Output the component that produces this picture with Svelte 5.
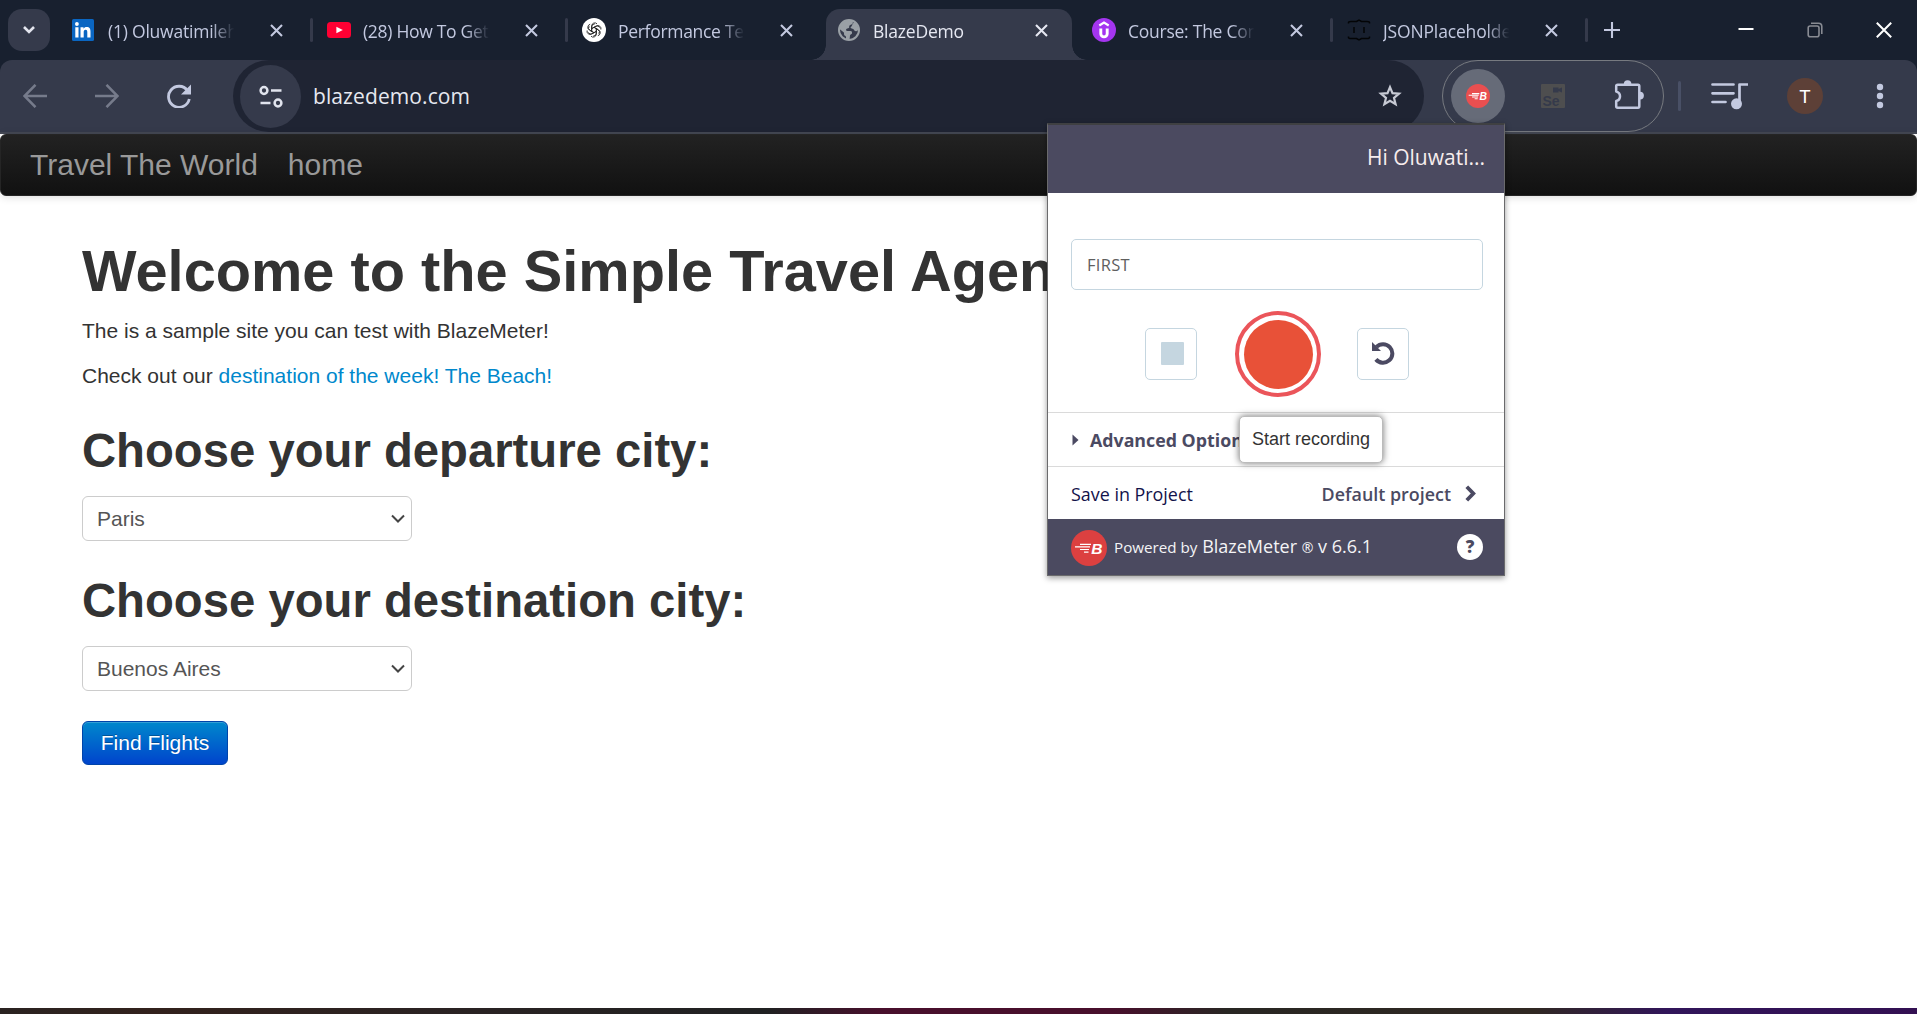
<script>
  const tabs = [
    { icon: 'linkedin', title: '(1) Oluwatimilehin', spacing: -0.22 },
    { icon: 'youtube', title: '(28) How To Get', spacing: -0.3 },
    { icon: 'openai', title: 'Performance Test', spacing: -0.3 },
    { icon: 'globe', title: 'BlazeDemo', active: true, spacing: -0.2 },
    { icon: 'udemy', title: 'Course: The Com', spacing: -0.25 },
    { icon: 'json', title: 'JSONPlaceholder', spacing: -0.15 }
  ];
  const petals = [0, 60, 120, 180, 240, 300];
</script>

{#snippet blaze(weight)}
  <svg viewBox="0 0 36 36" width="100%" height="100%">
    <path d="M9 14.300h11M4 16.900h15M9 19.500h9M13 22.100h4.500" fill="none" stroke="#fff" stroke-width={weight} />
    <text x="20.300" y="23.600" font-size="15.500" font-weight="700" font-style="italic" fill="#fff" font-family="Liberation Sans, sans-serif">B</text>
  </svg>
{/snippet}

<div class="window">
  <header class="strip">
    <button class="search" aria-label="Search tabs">
      <svg width="14" height="10" viewBox="0 0 14 10"><path d="M2 2l5 5 5-5" fill="none" stroke="#e3e5ee" stroke-width="2.600" /></svg>
    </button>
    <div class="tabs">
      {#each tabs as tab, i}
        <div class="tab" class:active={tab.active}>
          <span class="favicon">
            {#if tab.icon === 'linkedin'}
              <svg width="24" height="24" viewBox="0 0 24 24">
                <rect x="0" y="1" width="22" height="22" rx="1.500" fill="#0a66c2" />
                <circle cx="4.900" cy="6" r="1.900" fill="#fff" />
                <path transform="translate(-1 0)" d="M4.300 9.300h3.200v10.200H4.300zM9.500 9.300h3v1.400c.6-1 1.700-1.650 3.100-1.650 3.100 0 3.900 2 3.900 4.700v5.750h-3.200v-5.100c0-1.400-.2-2.600-1.700-2.600s-1.900 1.200-1.900 2.500v5.200H9.500z" fill="#fff" />
              </svg>
            {:else if tab.icon === 'youtube'}
              <svg width="24" height="24" viewBox="0 0 24 24">
                <rect x="0" y="4" width="24" height="16" rx="3.500" fill="#ff0033" />
                <path d="M9.400 8.700l6.400 3.300-6.400 3.300z" fill="#fff" />
              </svg>
            {:else if tab.icon === 'openai'}
              <svg width="24" height="24" viewBox="0 0 24 24">
                <circle cx="12" cy="12" r="12" fill="#fff" />
                {#each petals as a}
                  <path transform="rotate({a} 12 12)" d="M9.700 13.300V7.900a3.100 3.100 0 0 1 5.300-2.100M9.700 10.600l3.800-2.200a3.100 3.100 0 0 1 4.200 1.200" fill="none" stroke="#222" stroke-width=".85" />
                {/each}
              </svg>
            {:else if tab.icon === 'globe'}
              <svg width="24" height="24" viewBox="0 0 24 24">
                <circle cx="12" cy="12" r="10" fill="none" stroke="#9aa0a6" stroke-width="2" />
                <path d="M12 2c1.500 0 3 .4 4 1l-.3 2.500c-.8 1.200-2.300 1-3.200 1.900-.8.900.2 1.900-.7 2.700-.9.700-2 .2-2.600 1.100-.5.9.2 1.700 1.200 1.800h3.200c1.400.2 1.600 1.300 1.400 2.300-.2 1.100-1.700 1.100-2 2.200l-.4 3.700A10.500 10.500 0 0 1 9 21.500v-2.500c0-1.200-1.500-1.200-1.900-2.300-.2-.9.200-1.600-.5-2.400L2.500 11A10 10 0 0 1 12 2z" fill="#9aa0a6" />
                <path d="M16.200 5.200c-1.200 1-.7 2.100-1.600 3-.6.700-1.300 1.100-.9 1.900.5.700 1.600.4 2.500.9.800.5 1 1.800 2 2.100 1.200.3 2.200-.6 3.300-1.200a9 9 0 0 0-4.300-7.600z" fill="#9aa0a6" />
              </svg>
            {:else if tab.icon === 'udemy'}
              <svg width="24" height="24" viewBox="0 0 24 24">
                <circle cx="12" cy="12" r="12" fill="#a435f0" />
                <path d="M7.300 7.500L12 4.600l4.700 2.900" fill="none" stroke="#fff" stroke-width="2.200" />
                <path d="M8.800 10.500v5.200a3.200 3.200 0 0 0 6.400 0v-5.200" fill="none" stroke="#fff" stroke-width="2.900" />
              </svg>
            {:else}
              <svg width="24" height="24" viewBox="0 0 24 24" fill="none" stroke="#030406" stroke-width="1.500">
                <path d="M1.500 5.500V4.500Q1.500 3.500 4 3.500H9.500L12 2l2.500 1.500H20Q22.500 3.500 22.500 4.500v1M1.500 18.500v1Q1.500 20.500 4 20.500H9.500L12 22l2.500-1.500H20Q22.500 20.500 22.500 19.500v-1M7 9v6M17 9v6" />
              </svg>
            {/if}
          </span>
          <span class="title" style="letter-spacing: {tab.spacing}px">{tab.title}</span>
          <svg class="close" width="13" height="13" viewBox="0 0 13 13"><path d="M1 1l11 11M12 1L1 12" fill="none" stroke="currentColor" stroke-width="2.100" /></svg>
          <span class="sep" class:hidden={i === 2 || i === 3}></span>
        </div>
      {/each}
    </div>
    <svg class="plus" width="16" height="16" viewBox="0 0 16 16"><path d="M8 0v16M0 8h16" stroke="#c3c9e0" stroke-width="2.100" /></svg>
    <div class="controls">
      <svg width="16" height="16" viewBox="0 0 16 16"><path d="M.5 7h15" stroke="#fff" stroke-width="2" /></svg>
      <svg width="16" height="16" viewBox="0 0 16 16" fill="none" stroke="#888b93" stroke-width="1.600"><rect x="1.200" y="4" width="10.800" height="10.800" rx="2" /><path d="M4 1.300h7.500a3.300 3.300 0 0 1 3.300 3.300V12" /></svg>
      <svg width="16" height="16" viewBox="0 0 16 16"><path d="M.8.800l14.400 14.400M15.200.8L.8 15.200" stroke="#fff" stroke-width="2" /></svg>
    </div>
  </header>

  <div class="toolbar">
    <div class="nav-buttons">
      <svg width="24" height="24" viewBox="0 0 24 24" fill="none" stroke="#767b8b" stroke-width="2.500"><path d="M24 12H1.500M12.500.8L1.500 12l11 11.200" /></svg>
      <svg width="24" height="24" viewBox="0 0 24 24" fill="none" stroke="#767b8b" stroke-width="2.500"><path d="M0 12h22.500M11.500.8l11 11.200-11 11.200" /></svg>
      <svg width="24" height="24" viewBox="0 0 24 24"><path d="M20.500 6.500A10.500 10.500 0 1 0 22.300 15" fill="none" stroke="#c3c9e0" stroke-width="2.800" /><path d="M24 .5v10H14z" fill="#c3c9e0" /></svg>
    </div>
    <div class="omnibox">
      <span class="tune">
        <svg width="24" height="24" viewBox="0 0 24 24" fill="none" stroke="#e1e4ee" stroke-width="2.500"><circle cx="5" cy="6.500" r="3.400" /><path d="M12 6.500h10.500M1.500 19h10" /><circle cx="19" cy="19" r="3.400" /></svg>
      </span>
      <span class="url">blazedemo.com</span>
      <svg class="star" width="24" height="24" viewBox="0 0 24 24"><path d="M12 3.200l2.500 6 6.500.500-5 4.200 1.600 6.300L12 16.800l-5.600 3.400L8 13.900 3 9.700l6.500-.5z" fill="none" stroke="#c7cad4" stroke-width="2.200" /></svg>
    </div>
    <div class="extensions">
      <span class="ext-active"><span class="ext-logo">{@render blaze(1.8)}</span></span>
      <span class="selenium">
        <svg width="24" height="24" viewBox="0 0 24 24"><rect width="24" height="24" rx="1" fill="#4e4e4f" /><path d="M12 3.500h5.500v1.500l3.500-1.500v5l-3.500-1.500v1.500H12z" fill="#353a4b" /><text x="1.500" y="21.500" font-family="Liberation Sans, sans-serif" font-weight="700" font-size="14" fill="#353a4b">Se</text></svg>
      </span>
      <svg class="puzzle" width="30" height="30" viewBox="0 0 30 30"><path d="M2.200 6.200Q2.200 4.700 3.700 4.700H24Q25.300 4.700 25.300 6v20.300q0 1.400-1.300 1.400H3.700q-1.500 0-1.500-1.400v-5.300a4.800 4.800 0 0 0 0-9.400z" fill="none" stroke="#c3c9e0" stroke-width="2.500" stroke-linejoin="round" /><path d="M9.800 4a3.800 3.800 0 0 1 7.600 0zM26 11.700a3.900 3.900 0 0 1 0 7.800z" fill="#c3c9e0" /></svg>
    </div>
    <span class="divider"></span>
    <svg class="media" width="37" height="30" viewBox="0 0 37 30"><path d="M1.500 3.500h21M1.500 12.300h21M1.500 21h13M28.500 24V3.500h8" fill="none" stroke="#c3c9e0" stroke-width="2.700" stroke-linecap="round" stroke-linejoin="round" /><circle cx="25.500" cy="22.800" r="5.500" fill="#c3c9e0" /></svg>
    <span class="avatar">T</span>
    <svg class="more" width="8" height="26" viewBox="0 0 8 26" fill="#c3c9e0"><circle cx="4" cy="4" r="3.200" /><circle cx="4" cy="13" r="3.200" /><circle cx="4" cy="22" r="3.200" /></svg>
  </div>

  <main>
    <nav><a href="#world">Travel The World</a><a href="#home">home</a></nav>
    <section>
      <h1>Welcome to the Simple Travel Agency!</h1>
      <p>The is a sample site you can test with BlazeMeter!</p>
      <p>Check out our <a href="#week">destination of the week! The Beach!</a></p>
      <h2>Choose your departure city:</h2>
      <div class="select"><span>Paris</span><svg width="14" height="9" viewBox="0 0 14 9"><path d="M1 1.500l6 6 6-6" fill="none" stroke="#444" stroke-width="2" /></svg></div>
      <h2>Choose your destination city:</h2>
      <div class="select"><span>Buenos Aires</span><svg width="14" height="9" viewBox="0 0 14 9"><path d="M1 1.500l6 6 6-6" fill="none" stroke="#444" stroke-width="2" /></svg></div>
      <button class="find">Find Flights</button>
    </section>
  </main>
  <div class="taskbar"></div>

  <aside class="popup">
    <div class="hello">Hi Oluwati...</div>
    <div class="recorder">
      <div class="name">FIRST</div>
      <div class="actions">
        <span class="square stop"><i></i></span>
        <span class="record"><i></i></span>
        <span class="square">
          <svg width="24" height="24" viewBox="0 0 24 24"><path d="M5.400 5.900a9.300 9.300 0 1 1-.5 12.500" fill="none" stroke="#4b4a62" stroke-width="4" /><path d="M1 1v9h9z" fill="#4b4a62" /></svg>
        </span>
      </div>
    </div>
    <div class="row advanced"><svg width="7" height="12" viewBox="0 0 7 12"><path d="M.5.500l6 5.500-6 5.500z" fill="#4b4a62" /></svg><b>Advanced Options</b></div>
    <div class="row project"><span>Save in Project</span><b>Default project</b><svg width="11" height="17" viewBox="0 0 11 17"><path d="M1.800 1.800L8.300 8.500l-6.500 6.700" fill="none" stroke="#4b4a62" stroke-width="3.800" /></svg></div>
    <div class="footer">
      <span class="logo">{@render blaze(1.2)}</span>
      <span class="powered"><small>Powered by</small> BlazeMeter <sup>®</sup> v 6.6.1</span>
      <span class="help">?</span>
    </div>
    <div class="tooltip">Start recording</div>
  </aside>
</div>

<style>
  :global(body) { background: #fff; overflow: hidden; }
  .window { position: relative; display: flex; flex-direction: column; width: 1917px; height: 1014px; overflow: hidden; background: #18202f; font-family: "Liberation Sans", Arial, sans-serif; }
  svg { display: block; flex: none; }
  span, b, div, nav, button { box-sizing: border-box; }
  .strip { display: flex; align-items: center; height: 60px; flex: none; }
  .search { width: 42px; height: 42px; margin: 0 6px 0 8px; padding: 0; border: 0; border-radius: 14px; background: #353a4b; display: grid; place-items: center; }
  .tabs { display: flex; align-self: stretch; }
  .tab { position: relative; display: flex; align-items: center; width: 255px; height: 60px; padding-left: 16px; color: #c3c9e0; }
  .favicon { flex: none; width: 24px; height: 24px; margin-right: 12px; }
  .title { flex: none; width: 129px; height: 30px; margin-top: 2px; overflow: hidden; white-space: nowrap; font: 17.500px/30px "Open Sans", sans-serif; -webkit-mask-image: linear-gradient(90deg, #000 80%, transparent 98%); mask-image: linear-gradient(90deg, #000 80%, transparent 98%); }
  .close { margin-left: 33px; }
  .sep { flex: none; width: 3px; height: 24px; margin-left: 27px; border-radius: 2px; background: #353a4b; }
  .sep.hidden { visibility: hidden; }
  .active { color: #e6e8f2; }
  .active > * { position: relative; }
  .active::before { content: ''; position: absolute; left: 5px; top: 9px; width: 246px; height: 51px; border-radius: 14px 14px 0 0; background: #353a4b; }
  .active::after { content: ''; position: absolute; left: -10px; bottom: 0; width: 276px; height: 15px; background: radial-gradient(circle at 0 0, transparent 14.500px, #353a4b 15px) left / 15px 15px no-repeat, radial-gradient(circle at 100% 0, transparent 14.500px, #353a4b 15px) right / 15px 15px no-repeat; }
  .plus { margin-left: 18px; }
  .controls { display: flex; gap: 53px; margin-left: auto; margin-right: 25px; }

  .toolbar { display: flex; align-items: center; height: 74px; flex: none; background: #353a4b; border-bottom: 2px solid #444854; border-radius: 12px 12px 0 0; box-sizing: border-box; }
  .nav-buttons { display: flex; gap: 48px; margin-left: 23px; }
  .omnibox { display: flex; align-items: center; width: 1191px; height: 72px; margin-left: 42px; padding: 0 22px 0 7px; border-radius: 36px; background: #1f2433; }
  .tune { display: grid; place-items: center; width: 61px; height: 63px; border-radius: 50%; background: #353a4b; }
  .url { margin: -1px 0 0 12px; color: #e6e8f0; font: 21px/30px "Open Sans", sans-serif; letter-spacing: .1px; }
  .star { margin-left: auto; }
  .extensions { display: flex; align-items: center; width: 222px; height: 72px; margin-left: 18px; padding-left: 8px; border: 1.500px solid #777a80; border-radius: 36px; }
  .ext-active { display: grid; place-items: center; width: 54px; height: 54px; border-radius: 50%; background: #666b78; }
  .ext-logo { width: 24px; height: 24px; border-radius: 50%; background: #e94f50; }
  .selenium { margin-left: 36px; }
  .puzzle { margin: -3px 0 0 49px; }
  .divider { width: 3px; height: 30px; margin-left: 14px; border-radius: 2px; background: #495066; }
  .media { margin-left: 30px; }
  .avatar { width: 36px; height: 36px; margin-left: 39px; border-radius: 50%; background: #5d4037; color: #fff; text-align: center; font: 19px/37px Roboto, sans-serif; }
  .more { margin-left: 53px; }

  main { flex: 1; background: #fff; color: #333; font-size: 21px; line-height: 30px; }
  nav { display: flex; align-items: center; height: 62px; padding-left: 29px; gap: 30px; border: 1px solid #252525; border-radius: 6px; background: linear-gradient(#222, #111); box-shadow: 0 1px 8px rgba(0, 0, 0, .15); font-size: 30px; line-height: 30px; }
  nav a { color: #999; text-decoration: none; }
  section { padding: 45px 0 0 82px; }
  h1, h2, p { margin: 0 0 15px; white-space: nowrap; }
  h1, h2 { line-height: 60px; font-weight: 700; }
  h1 { font-size: 57.750px; }
  h2 { margin-top: 30px; font-size: 47.250px; }
  p a { color: #08c; text-decoration: none; }
  .select { display: flex; align-items: center; justify-content: space-between; width: 330px; height: 45px; padding: 0 6px 0 14px; border: 1.500px solid #ccc; border-radius: 6px; color: #555; }
  .find { display: block; width: 146px; height: 44px; margin-top: 30px; padding: 0 0 1px; border: 1px solid #04a; border-radius: 6px; background: linear-gradient(#08c, #04c); box-shadow: inset 0 1px 0 rgba(255, 255, 255, .2); color: #fff; font: 21px/30px "Liberation Sans", Arial, sans-serif; text-shadow: 0 -1px 0 rgba(0, 0, 0, .25); }
  .taskbar { height: 6px; flex: none; background: linear-gradient(90deg, #2a2321 0, #32211c 8%, #292223 25%, #202122 40%, #480f2c 46%, #480f2c 58%, #282623 64%, #302822 80%, #31155a 87%, #331052 100%); }

  .popup { position: absolute; left: 1047px; top: 123px; width: 458px; height: 453px; box-sizing: border-box; border: 1px solid #6a6a6c; border-top: 2px solid #3f4042; background: #fff; box-shadow: 0 2px 6px rgba(0, 0, 0, .4); color: #4b4a62; font: 17.900px/30px "Open Sans", sans-serif; display: flex; flex-direction: column; }
  .hello { height: 68px; padding: 18px 19px 0 0; background: #4b4a60; color: #f7eded; text-align: right; font-size: 21px; line-height: 29px; }
  .recorder { height: 219px; padding: 46px 21px 0 23px; }
  .name { height: 51px; padding-left: 15px; border: 1px solid #c5d6e0; border-radius: 5px; color: #5f5f5f; font-size: 16.500px; font-weight: 500; line-height: 50px; letter-spacing: .3px; }
  .actions { display: flex; align-items: center; justify-content: center; margin-top: 21px; gap: 37px; }
  .square { display: grid; place-items: center; width: 52px; height: 52px; border: 1px solid #c5d6e0; border-radius: 5px; }
  .square:last-child { margin-left: -1px; padding: 0 1px 2px 0; }
  .stop { padding: 0 0 1px 2px; }
  .square i { width: 23px; height: 23px; border-radius: 1px; background: #c5d6e0; }
  .record { display: grid; place-items: center; width: 86px; height: 86px; border: 4px solid #eb555a; border-radius: 50%; margin-left: 1px; }
  .record i { width: 69px; height: 69px; border-radius: 50%; background: #e85138; }
  .row { display: flex; align-items: center; height: 54px; border-top: 1px solid #dadada; padding: 0 28px 0 23px; white-space: nowrap; }
  .advanced { padding-left: 24px; }
  .advanced b { margin-left: 11px; font-size: 17.800px; }
  .project { height: 53px; }
  .project span { color: #12124a; padding-top: 2px; }
  .project b { margin-left: auto; padding-top: 2px; font-weight: 600; }
  .project svg { margin-left: 14px; }
  .footer { display: flex; align-items: center; flex: 1; padding: 0 21px 0 23px; background: #4b4a60; color: #f4f4f6; white-space: nowrap; }
  .logo { width: 36px; height: 36px; margin-top: 2px; border-radius: 50%; background: #dc4040; }
  .powered { margin: -1px 0 0 7px; font-size: 18px; }
  .powered small { font-size: 15.200px; }
  .powered sup { font-size: 14px; line-height: 1; vertical-align: 0; }
  .help { width: 26px; height: 26px; margin-left: auto; border-radius: 50%; background: #fff; color: #4b4a60; text-align: center; font-size: 17px; font-weight: 800; line-height: 25px; }
  .tooltip { position: absolute; left: 191px; top: 291px; width: 144px; height: 47px; border: 1px solid #bbb; border-radius: 5px; background: #fff; box-shadow: 0 0 7px rgba(0, 0, 0, .55); color: #333; text-align: center; font: 18px/44px "Liberation Sans", Arial, sans-serif; }
</style>
